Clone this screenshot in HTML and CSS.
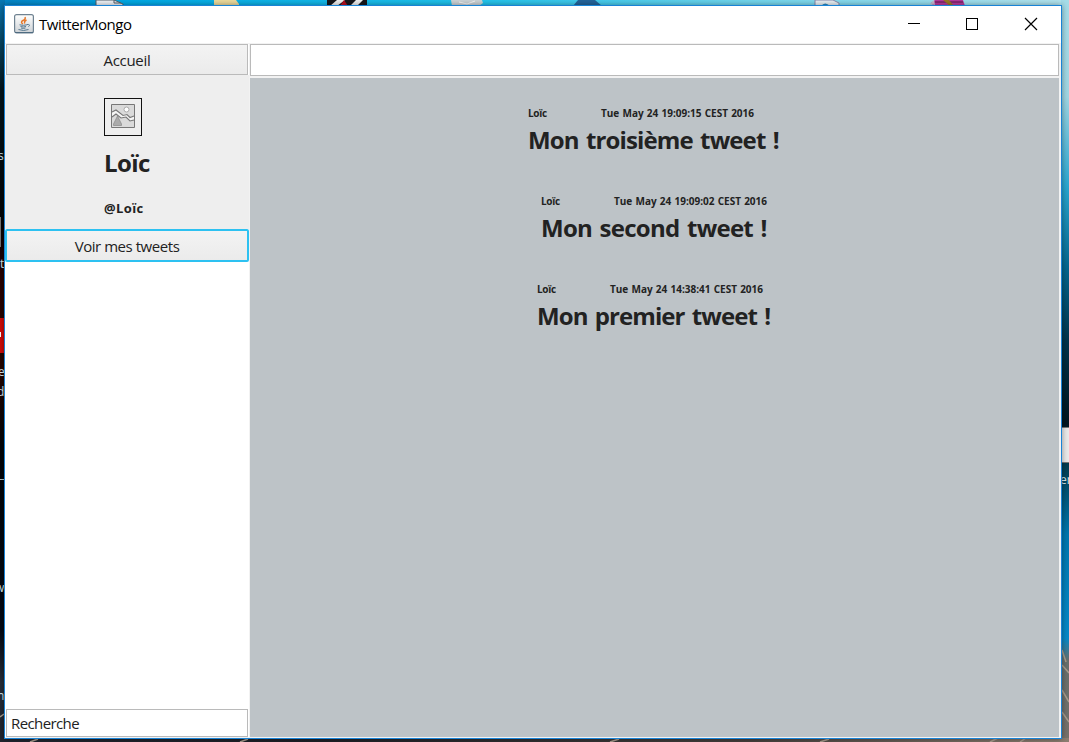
FILE: index.html
```html
<!DOCTYPE html>
<html lang="fr">
<head>
<meta charset="utf-8">
<title>TwitterMongo</title>
<link rel="stylesheet" href="styles.css">
</head>
<body>
<div class="desktop">
  <svg class="wallpaper" width="1069" height="742" viewBox="0 0 1069 742" aria-hidden="true">
    <defs>
      <linearGradient id="sky"><stop offset="0" stop-color="#0583c5"/><stop offset=".12" stop-color="#00a9e5"/><stop offset=".45" stop-color="#22c4ec"/><stop offset=".7" stop-color="#72d6ed"/><stop offset="1" stop-color="#b3e4ee"/></linearGradient>
      <linearGradient id="left" x2="0" y2="1"><stop offset="0" stop-color="#0878b5"/><stop offset=".06" stop-color="#06415c"/><stop offset=".12" stop-color="#02141c"/><stop offset=".3" stop-color="#020305"/><stop offset=".37" stop-color="#260000"/><stop offset=".5" stop-color="#240500"/><stop offset=".6" stop-color="#020408"/><stop offset=".85" stop-color="#030914"/><stop offset=".92" stop-color="#262d39"/><stop offset="1" stop-color="#20242d"/></linearGradient>
      <linearGradient id="right" x2="0" y2="1"><stop offset="0" stop-color="#a5dce8"/><stop offset=".13" stop-color="#9fd5e2"/><stop offset=".25" stop-color="#2ba6cf"/><stop offset=".36" stop-color="#04668e"/><stop offset=".46" stop-color="#01334a"/><stop offset=".57" stop-color="#00151f"/><stop offset=".63" stop-color="#003e53"/><stop offset=".72" stop-color="#0076ad"/><stop offset=".86" stop-color="#0788c7"/><stop offset=".89" stop-color="#666f6c"/><stop offset="1" stop-color="#77716a"/></linearGradient>
      <linearGradient id="ground"><stop offset="0" stop-color="#20252f"/><stop offset=".3" stop-color="#1d2027"/><stop offset=".7" stop-color="#45403d"/><stop offset="1" stop-color="#8c7e71"/></linearGradient>
    </defs>
    <rect width="1069" height="8" fill="url(#sky)"/>
    <rect y="0" width="5" height="742" fill="url(#left)"/>
    <rect x="1061" y="0" width="8" height="742" fill="url(#right)"/>
    <rect y="738" width="1069" height="4" fill="url(#ground)"/>
    <path d="M1062 665l7 8M1062 690l7 12M1062 712l7 10M1062 650l4 12M990 742l8-4M1020 742l6-4M820 742l9-3M610 742l9-3M0 717l4-3M30 742l8-3M240 742l8-3" stroke="#a99d8e" stroke-width="1.5"/>
    <path d="M96 0h18l9 4v2H96z" fill="#eef2f7" stroke="#555f69"/><path d="M114 0v3h7" fill="none" stroke="#555f69"/>
    <path d="M214 0h22l3 4v2h-25z" fill="#ebda9c"/>
    <path d="M327 0h40v6h-40z" fill="#17171b"/><path d="M337 0h8l-8 6h-7zM356 0h7l-6 6h-7z" fill="#eee"/><path d="M344 0l4 6h-8z" fill="#b80f20"/>
    <path d="M451 0h31l1 3-4 3h-27z" fill="#ccd3d6"/><path d="M459 2l8 2 8-3" fill="none" stroke="#f6f6f6"/>
    <path d="M578 0h17l7 6h-29z" fill="#24659b"/>
    <path d="M815 0h18l6 3v3h-24z" fill="#e7eff4" stroke="#88a"/><path d="M821 6q4-5 9 0" fill="#2b8bc0"/>
    <path d="M935 0h28l2 6h-31l-3-3z" fill="#b83a9c"/><path d="M935 2h28" stroke="#5d174f"/><path d="M943 0l7 6h4l-5-6z" fill="#9a7822"/><path d="M930 4l4-4 1 5z" fill="#c6bad0"/>
    <rect y="217" width="1" height="30" fill="#777"/>
    <rect x="0" y="318" width="4" height="35" fill="#cf0b09"/><rect y="332" width="1" height="5" fill="#fff"/>
    <path d="M0 479.500h4" stroke="#b8c7c7"/>
    <rect x="1062" y="428" width="7" height="34" fill="#e9e9e9"/><path d="M1062 427.500h7M1062 462.500h7" stroke="#777"/>
    <g class="icon-label"><text x="-2" y="160">s</text><text x="0" y="268">t</text><text x="-2" y="376">e</text><text x="-3" y="396">d</text><text x="-5" y="592">w</text><text x="-3" y="700">h</text><text x="1060" y="484">er</text></g>
  </svg>
  <main class="window">
    <header class="titlebar">
      <svg class="java" width="20" height="20" viewBox="0 0 20 20">
        <defs><linearGradient id="tile" x2="0" y2="1"><stop stop-color="#fff"/><stop offset="1" stop-color="#cdd1d5"/></linearGradient></defs>
        <rect x=".6" y=".6" width="18.800" height="18.400" rx="2" fill="url(#tile)" stroke="#6f8291" stroke-width="1.200"/>
        <path d="M1 18.500h18" stroke="#4e6b81"/>
        <path d="M11 3q1 2-2 3.500T9 10M12.500 6Q9.500 7.500 11 9.500" fill="none" stroke="#e67627" stroke-width="1.400"/>
        <path d="M5.500 10.800q4 1 7.500 0M6.500 12.500q3 1 5.500 0M7 14q2.500.8 4.500 0M13 10.500q4-.3 1.500 2.200M4.500 15.500q5 2 10 0" fill="none" stroke="#567890"/>
      </svg>
      <h1 class="title">TwitterMongo</h1>
      <svg class="controls" width="132" height="14" viewBox="0 0 132 14" fill="none" stroke="#000">
        <path d="M0 6.500h12M58.500 1.500h11v11h-11z" shape-rendering="crispEdges"/>
        <path d="M117 1l12 12M129 1l-12 12" stroke-width="1.200"/>
      </svg>
    </header>
    <div class="content">
      <aside class="sidebar">
        <button class="button home"><span class="t-home">Accueil</span></button>
        <section class="profile">
          <div class="avatar">
            <svg width="24" height="24" viewBox="0 0 24 24">
              <path d="M.5.500h23v23H.5z" fill="#dadada" stroke="#777"/>
              <circle cx="15.500" cy="5.500" r="2.500" fill="#fff" stroke="#aaa"/>
              <path d="M1 8l4-2 7 5 4-1 3 3 4-1v4l-4 1-4-4-5 1-5-4-4 3z" fill="#f5f5f5"/>
              <path d="M1 8l4-2 7 5.500 4-1 3 3 4-1.500M1 13l4-3 5 4 5-1 4 4 4-1" fill="none" stroke="#777" stroke-width="1.100"/>
              <path d="M6.500 12l2 4 2 4v1.500h-8V20l2-4z" fill="#aaa" stroke="#888" stroke-width=".7"/>
            </svg>
          </div>
          <h2 class="name">Loïc</h2>
          <p class="handle">@Loïc</p>
        </section>
        <button class="button focused"><span class="t-mine">Voir mes tweets</span></button>
        <div class="results"></div>
        <input class="search" value="Recherche" aria-label="Recherche">
      </aside>
      <section class="main">
        <input class="compose" aria-label="Tweet">
        <div class="feed">
          <article class="tweet third"><div class="meta"><span class="author">Loïc</span><time>Tue May 24 19:09:15 CEST 2016</time></div><p class="message">Mon troisième tweet !</p></article>
          <article class="tweet second"><div class="meta"><span class="author">Loïc</span><time>Tue May 24 19:09:02 CEST 2016</time></div><p class="message">Mon second tweet !</p></article>
          <article class="tweet first"><div class="meta"><span class="author">Loïc</span><time>Tue May 24 14:38:41 CEST 2016</time></div><p class="message">Mon premier tweet !</p></article>
        </div>
      </section>
    </div>
  </main>
</div>
</body>
</html>
```
FILE: styles.css
```css
* { box-sizing: border-box; }
body, h1, h2, p { margin: 0; }
body { overflow: hidden; font-family: "Open Sans", "Noto Sans", sans-serif; color: #222; }
.desktop { position: relative; width: 1069px; height: 742px; background: #1b2530; }
.wallpaper { display: block; }
.icon-label { fill: #dce9ee; font-size: 12px; }
.window { position: absolute; left: 4px; top: 5px; width: 1058px; height: 734px; border: 1px solid #1883d7; background: #f2f2f2; display: flex; flex-direction: column; box-shadow: 0 0 6px rgba(0,0,0,.4); }
.titlebar { height: 37px; flex: none; display: flex; align-items: center; background: #fff; padding-left: 9px; }
.java { margin-top: -2px; }
.title { margin-left: 5px; margin-top: -2px; font-size: 15px; font-weight: 400; letter-spacing: -.43px; color: #000; }
.controls { margin-left: auto; margin-right: 21px; margin-top: -1px; }
.content { flex: 1; min-height: 0; display: flex; gap: 1px; padding: 1px 2px 1px 0; }
.sidebar { width: 244px; display: flex; flex-direction: column; background: #fff; }
.button { font: 15px "Open Sans", sans-serif; color: #222; padding: 0; background: linear-gradient(#f3f3f3, #ebebeb); }
.home { height: 31px; margin: 0 1px; border: 1px solid #bababa; }
.t-home { letter-spacing: -.3px; }
.t-mine { letter-spacing: -.45px; }
.profile { height: 154px; background: #eee; padding: 23px 0 0 99px; }
.avatar { width: 38px; height: 38px; border: 1px solid #111; padding: 5px 6px 7px; }
.avatar svg { display: block; }
.name { margin-top: 11px; font-size: 24px; line-height: 32px; letter-spacing: -.6px; }
.handle { margin-top: 20px; font-size: 13px; line-height: 18px; font-weight: 700; letter-spacing: .4px; }
.focused { height: 33px; border: 2px solid #2dc1f1; border-radius: 2px; flex: none; }
.results { flex: 1; background: #fff; }
.search { height: 28px; margin: 0 1px; border: 1px solid #bababa; border-radius: 0; padding: 0 4px; font: 15px "Open Sans", sans-serif; letter-spacing: -.6px; color: #222; }
.main { flex: 1; display: flex; flex-direction: column; gap: 2px; }
.compose { height: 32px; border: 1px solid #bababa; border-radius: 0; background: #fff; width: 100%; padding: 0 4px; }
.feed { flex: 1; background: #bdc3c7; padding-top: 27px; }
.tweet { height: 88px; }
.third { margin-left: 278px; letter-spacing: -.88px; }
.second { margin-left: 291px; letter-spacing: -.73px; }
.first { margin-left: 287px; letter-spacing: -.93px; }
.meta { display: flex; height: 17px; font-size: 10px; line-height: 17px; font-weight: 700; letter-spacing: 0; word-spacing: .6px; }
.author { width: 73px; letter-spacing: -.3px; }
.message { font-size: 24px; line-height: 36px; font-weight: 700; word-spacing: 2px; white-space: nowrap; }
```
